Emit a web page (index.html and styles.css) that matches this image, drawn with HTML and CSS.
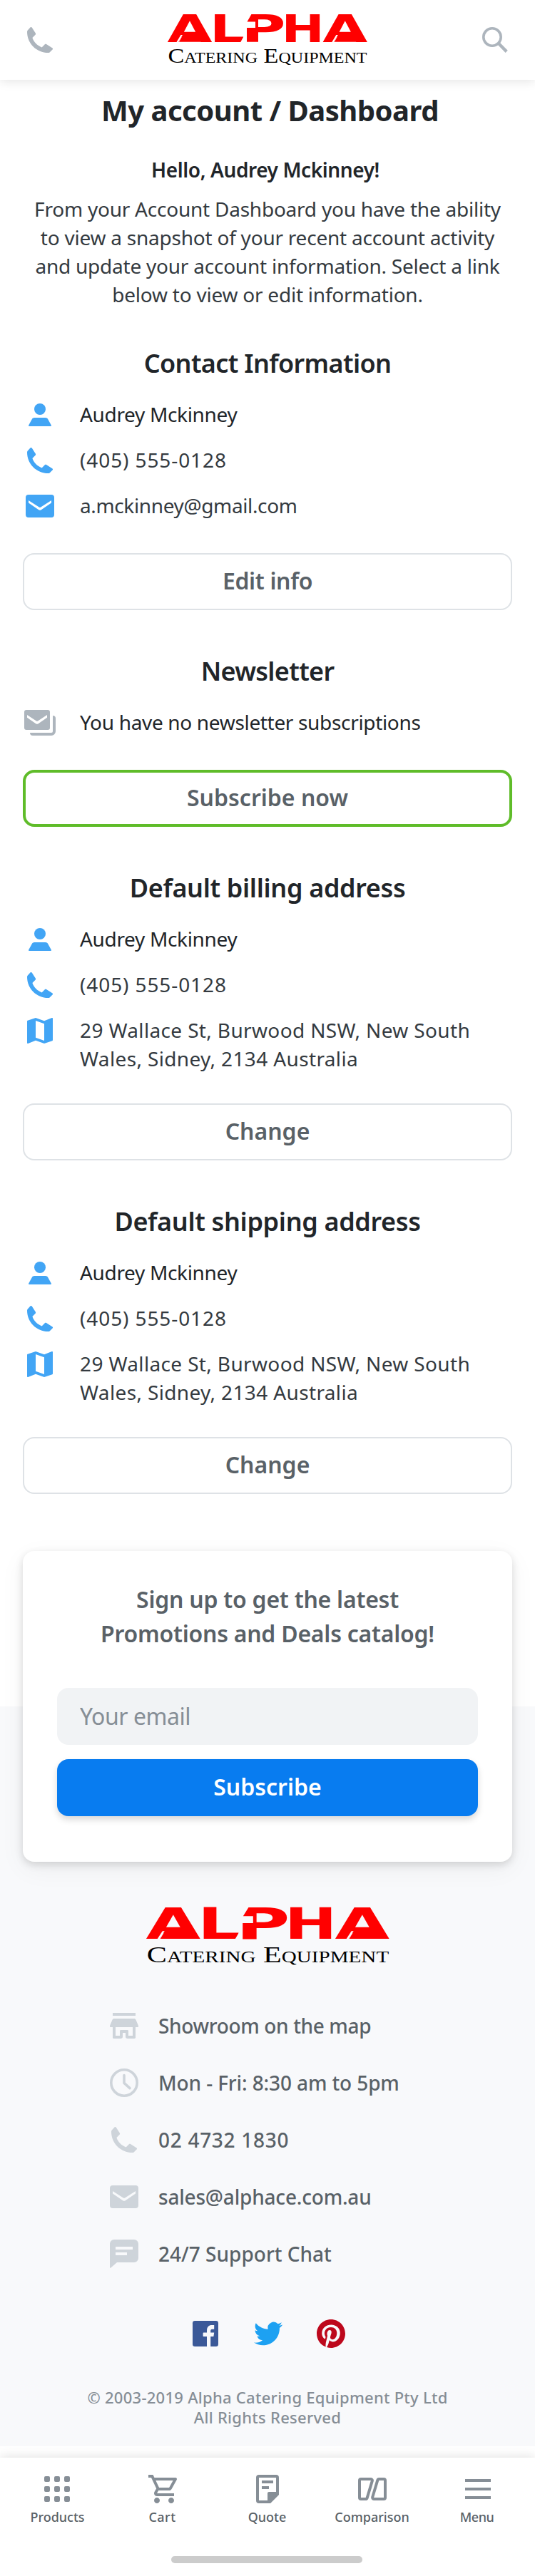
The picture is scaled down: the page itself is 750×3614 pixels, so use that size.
FILE: index.html
```html
<!DOCTYPE html>
<html lang="en">
<head>
<meta charset="utf-8">
<title>My account / Dashboard</title>
<link rel="stylesheet" href="styles.css">
</head>
<body>
<svg class="sprite" aria-hidden="true">
  <symbol id="phone" viewBox="0 0 24 24"><path d="M5.200 3.300c.5-.4 1-.3 1.300.2L8.900 7.300c.2.4.2.8-.1 1.100L6.700 10.500c1 2.900 3.400 5.500 6.600 6.700l2.100-2.100c.3-.3.7-.3 1.100-.1l4.100 2.600c.5.3.6.8.2 1.200l-2 1.900c-.3.2-.7.3-1 .3C9.700 21 3 14.500 3 6.200c0-.4.2-.8.5-1.100z"/></symbol>
  <symbol id="search" viewBox="0 0 24 24"><circle cx="10" cy="10" r="6.100" fill="none" stroke="currentColor" stroke-width="1.800"/><path d="m14.500 14.500 5.600 5.700" fill="none" stroke="currentColor" stroke-width="2.200"/></symbol>
  <symbol id="person" viewBox="0 0 24 24"><circle cx="12" cy="8" r="4"/><path d="M8.300 14h7.400c.9 0 1.600.4 2 1.200l2.200 4c.2.4 0 .8-.5.8H4.600c-.5 0-.7-.4-.5-.8l2.200-4c.4-.8 1.100-1.200 2-1.200z"/></symbol>
  <symbol id="mail" viewBox="0 0 24 24"><path d="M4 4h16a2 2 0 0 1 2 2v12a2 2 0 0 1-2 2H4a2 2 0 0 1-2-2V6a2 2 0 0 1 2-2zm0 4v1.800l7.100 4.800c.6.400 1.200.400 1.800 0L20 9.800V8l-7.400 4.800a1.100 1.100 0 0 1-1.200 0z" fill-rule="evenodd"/></symbol>
  <symbol id="mails" viewBox="0 0 24 24"><path d="M2.500 3h15A1.500 1.500 0 0 1 19 4.500v11a1.500 1.500 0 0 1-1.500 1.500h-15A1.500 1.500 0 0 1 1 15.500v-11A1.500 1.500 0 0 1 2.500 3zM3 6.500v1.900l6.300 4.300c.4.300 1 .3 1.400 0L17 8.400V6.500l-6.500 4.200a1 1 0 0 1-1 0z" fill-rule="evenodd"/><path d="M21 7a2 2 0 0 1 2 2v9a3 3 0 0 1-3 3H7a2 2 0 0 1-2-2h15a1 1 0 0 0 1-1z"/></symbol>
  <symbol id="map" viewBox="0 0 24 24"><path d="m20.500 3-.16.03L15 5.100 9 3 3.360 4.900c-.21.070-.36.250-.36.480V20.500c0 .280.220.500.500.500l.160-.030L9 18.900l6 2.100 5.640-1.900c.210-.070.360-.250.360-.480V3.500c0-.280-.220-.500-.500-.500zM15 19l-6-2.110V5l6 2.110V19z"/></symbol>
  <symbol id="store" viewBox="0 0 24 24"><path d="M4 3h16v2H4zM5 7h14c.6 0 1 .3 1.200.8L22 12v.500c0 .3-.2.500-.5.500H20v7.300c0 .4-.3.700-.7.700h-5c-.7 0-1.300-.5-1.300-1.200V17h-2v2.800c0 .7-.6 1.200-1.300 1.200h-5c-.4 0-.7-.3-.7-.7V13H2.500c-.3 0-.5-.2-.5-.5V12l1.800-4.200C4 7.300 4.400 7 5 7zm1 6v6h3v-3.300c0-.4.300-.7.700-.7h4.600c.4 0 .7.300.7.700V19h3v-6z" fill-rule="evenodd"/></symbol>
  <symbol id="clock" viewBox="0 0 24 24"><g fill="none" stroke="currentColor"><circle cx="12" cy="12" r="9.100" stroke-width="1.800"/><path d="M12 6.800v5.400l4 3.600" stroke-width="1.800" stroke-linecap="round" stroke-linejoin="round"/></g></symbol>
  <symbol id="chat" viewBox="0 0 24 24"><path d="M5 2h14a3 3 0 0 1 3 3v10a3 3 0 0 1-3 3H7l-4.300 3.800c-.3.300-.7.100-.7-.3V5a3 3 0 0 1 3-3zm1 5v2h12V7zm0 4v2h8v-2z" fill-rule="evenodd"/></symbol>
  <symbol id="grid" viewBox="0 0 24 24"><path d="M3.500 3h2a1 1 0 0 1 1 1v2a1 1 0 0 1-1 1h-2a1 1 0 0 1-1-1V4a1 1 0 0 1 1-1zm7 0h2a1 1 0 0 1 1 1v2a1 1 0 0 1-1 1h-2a1 1 0 0 1-1-1V4a1 1 0 0 1 1-1zm7 0h2a1 1 0 0 1 1 1v2a1 1 0 0 1-1 1h-2a1 1 0 0 1-1-1V4a1 1 0 0 1 1-1zm-14 7h2a1 1 0 0 1 1 1v2a1 1 0 0 1-1 1h-2a1 1 0 0 1-1-1v-2a1 1 0 0 1 1-1zm7 0h2a1 1 0 0 1 1 1v2a1 1 0 0 1-1 1h-2a1 1 0 0 1-1-1v-2a1 1 0 0 1 1-1zm7 0h2a1 1 0 0 1 1 1v2a1 1 0 0 1-1 1h-2a1 1 0 0 1-1-1v-2a1 1 0 0 1 1-1zm-14 7h2a1 1 0 0 1 1 1v2a1 1 0 0 1-1 1h-2a1 1 0 0 1-1-1v-2a1 1 0 0 1 1-1zm7 0h2a1 1 0 0 1 1 1v2a1 1 0 0 1-1 1h-2a1 1 0 0 1-1-1v-2a1 1 0 0 1 1-1zm7 0h2a1 1 0 0 1 1 1v2a1 1 0 0 1-1 1h-2a1 1 0 0 1-1-1v-2a1 1 0 0 1 1-1z"/></symbol>
  <symbol id="cart" viewBox="0 0 24 24"><path transform="translate(1 0)" d="M15.550 13c.75 0 1.410-.41 1.750-1.030l3.580-6.490A.996.996 0 0 0 20.010 4H5.210l-.94-2H1v2h2l3.600 7.590-1.350 2.440C4.520 15.370 5.480 17 7 17h12v-2H7l1.100-2h7.450zM6.160 6h12.150l-2.760 5H8.530L6.160 6zM7 18c-1.100 0-1.990.9-1.990 2S5.900 22 7 22s2-.9 2-2-.9-2-2-2zm10 0c-1.100 0-1.990.9-1.990 2s.89 2 1.990 2 2-.9 2-2-.9-2-2-2z"/></symbol>
  <symbol id="quote" viewBox="0 0 24 24"><path d="M6 3h12a1 1 0 0 1 1 1v11.600L13.600 21H6a1 1 0 0 1-1-1V4a1 1 0 0 1 1-1z" fill="none" stroke="currentColor" stroke-width="2"/><path d="M8 6h8v2H8zm0 4h5v2H8zm5 4h7v1.800L13.800 22H12v-7a1 1 0 0 1 1-1z"/></symbol>
  <symbol id="compare" viewBox="0 0 24 24"><g fill="none" stroke="currentColor" stroke-width="2"><path d="M4 5h7a1 1 0 0 1 .9 1.300L8.300 18.300a1 1 0 0 1-1 .7H4a1 1 0 0 1-1-1V6a1 1 0 0 1 1-1z"/><path d="M4 5h7a1 1 0 0 1 .9 1.300L8.300 18.300a1 1 0 0 1-1 .7H4a1 1 0 0 1-1-1V6a1 1 0 0 1 1-1z" transform="rotate(180 12 12)"/></g></symbol>
  <symbol id="menu" viewBox="0 0 24 24"><path d="M3.500 5h18v2h-18zm0 6h18v2h-18zm0 6h18v2h-18z"/></symbol>
  <symbol id="facebook" viewBox="0 0 24 24"><rect x="3" y="3" width="18" height="18" rx="1.600"/><path d="M14.800 21v-7h-2.300a.4.400 0 0 1-.4-.4v-1.900c0-.2.200-.4.400-.4h2.300V9.800c0-2.500 1.400-3.800 3.500-3.800h1.600v2.900h-1.300c-1 0-1.200.6-1.200 1.300v1.100h2.500l-.4 2.700h-2.100v7z" transform="translate(-1.800 0)" fill="#f8f9fb"/></symbol>
  <symbol id="twitter" viewBox="0 0 24 24"><path transform="translate(2 2) scale(.8333)" d="M23.953 4.570a10 10 0 0 1-2.825.775 4.958 4.958 0 0 0 2.163-2.723c-.951.555-2.005.959-3.127 1.184a4.920 4.920 0 0 0-8.384 4.482C7.690 8.095 4.067 6.130 1.640 3.162a4.822 4.822 0 0 0-.666 2.475c0 1.710.870 3.213 2.188 4.096a4.904 4.904 0 0 1-2.228-.616v.060a4.923 4.923 0 0 0 3.946 4.827 4.996 4.996 0 0 1-2.212.085 4.936 4.936 0 0 0 4.604 3.417 9.867 9.867 0 0 1-6.102 2.105c-.390 0-.779-.023-1.170-.067a13.995 13.995 0 0 0 7.557 2.209c9.053 0 13.998-7.496 13.998-13.985 0-.210 0-.420-.015-.630A9.935 9.935 0 0 0 24 4.590z"/></symbol>
  <symbol id="pinterest" viewBox="0 0 24 24"><path transform="translate(2 2) scale(.8333)" d="M12 0C5.373 0 0 5.372 0 12c0 5.084 3.163 9.426 7.627 11.174-.105-.949-.200-2.405.042-3.441.218-.937 1.407-5.965 1.407-5.965s-.359-.719-.359-1.782c0-1.668.967-2.914 2.171-2.914 1.023 0 1.518.769 1.518 1.690 0 1.029-.655 2.568-.994 3.995-.283 1.194.599 2.169 1.777 2.169 2.133 0 3.772-2.249 3.772-5.495 0-2.873-2.064-4.882-5.012-4.882-3.414 0-5.418 2.561-5.418 5.207 0 1.031.397 2.138.893 2.738.098.119.112.224.083.345l-.333 1.360c-.053.220-.174.267-.402.161-1.499-.698-2.436-2.889-2.436-4.649 0-3.785 2.750-7.262 7.929-7.262 4.163 0 7.398 2.967 7.398 6.931 0 4.136-2.607 7.464-6.227 7.464-1.216 0-2.359-.631-2.750-1.378l-.748 2.853c-.271 1.043-1.002 2.350-1.492 3.146C9.570 23.812 10.763 24 12 24c6.627 0 12-5.373 12-12 0-6.628-5.373-12-12-12z"/></symbol>
  <symbol id="logo" viewBox="234 16 282 80" preserveAspectRatio="none">
    <text y="58.700" class="logo-alpha"><tspan x="234.500" textLength="63" lengthAdjust="spacingAndGlyphs">A</tspan><tspan x="294" textLength="49.400" lengthAdjust="spacingAndGlyphs">L</tspan><tspan x="338.200" textLength="62.200" lengthAdjust="spacingAndGlyphs">P</tspan><tspan x="394.400" textLength="60.200" lengthAdjust="spacingAndGlyphs">H</tspan><tspan x="452.300" textLength="63" lengthAdjust="spacingAndGlyphs">A</tspan></text>
    <g fill="#f00"><path d="M256 49.500h28l5 9.200h-38zM473.800 49.500h28l5 9.200h-38z"/></g>
    <g class="logo-cut"><path d="m247.500 59 6-10h2.500l-6 10zM465.300 59l6-10h2.500l-6 10zM343 48.500 337 59.500h7zM345 19v11.500h1.500L353 19zM345 30.500h13V39h-13z"/></g>
    <text x="235.500" y="88.200" class="logo-caption" textLength="279" lengthAdjust="spacingAndGlyphs">Catering Equipment</text>
  </symbol>
</svg>

<header class="header">
  <svg class="icon"><use href="#phone"/></svg>
  <svg class="logo" role="img" aria-label="Alpha Catering Equipment"><use href="#logo"/></svg>
  <svg class="icon"><use href="#search"/></svg>
</header>

<main class="main">
  <h1 class="title">My account / Dashboard</h1>
  <p class="hello">Hello, Audrey Mckinney!</p>
  <p class="intro">From your Account Dashboard you have the ability<br>to view a snapshot of your recent account activity<br>and update your account information. Select a link<br>below to view or edit information.</p>

  <section class="section">
    <h2 class="heading heading-contact">Contact Information</h2>
    <ul class="rows">
      <li class="row"><svg class="icon"><use href="#person"/></svg><span class="name">Audrey Mckinney</span></li>
      <li class="row"><svg class="icon"><use href="#phone"/></svg><span class="tel">(405) 555-0128</span></li>
      <li class="row"><svg class="icon"><use href="#mail"/></svg><span class="email">a.mckinney@gmail.com</span></li>
    </ul>
    <button class="button button-edit">Edit info</button>
  </section>

  <section class="section">
    <h2 class="heading heading-news">Newsletter</h2>
    <ul class="rows">
      <li class="row row-muted"><svg class="icon"><use href="#mails"/></svg><span class="name">You have no newsletter subscriptions</span></li>
    </ul>
    <button class="button button-accent">Subscribe now</button>
  </section>

  <section class="section">
    <h2 class="heading">Default billing address</h2>
    <ul class="rows">
      <li class="row"><svg class="icon"><use href="#person"/></svg><span class="name">Audrey Mckinney</span></li>
      <li class="row"><svg class="icon"><use href="#phone"/></svg><span class="tel">(405) 555-0128</span></li>
      <li class="row"><svg class="icon"><use href="#map"/></svg><span class="address">29 Wallace St, Burwood NSW, New South<br>Wales, Sidney, 2134 Australia</span></li>
    </ul>
    <button class="button">Change</button>
  </section>

  <section class="section">
    <h2 class="heading">Default shipping address</h2>
    <ul class="rows">
      <li class="row"><svg class="icon"><use href="#person"/></svg><span class="name">Audrey Mckinney</span></li>
      <li class="row"><svg class="icon"><use href="#phone"/></svg><span class="tel">(405) 555-0128</span></li>
      <li class="row"><svg class="icon"><use href="#map"/></svg><span class="address">29 Wallace St, Burwood NSW, New South<br>Wales, Sidney, 2134 Australia</span></li>
    </ul>
    <button class="button">Change</button>
  </section>
</main>

<footer class="footer">
  <form class="signup">
    <h3 class="signup-title">Sign up to get the latest<br>Promotions and Deals catalog!</h3>
    <input class="field" type="email" placeholder="Your email" aria-label="Your email">
    <button class="submit" type="button">Subscribe</button>
  </form>
  <svg class="logo logo-large" role="img" aria-label="Alpha Catering Equipment"><use href="#logo"/></svg>
  <ul class="contacts">
    <li class="contact"><svg class="icon"><use href="#store"/></svg><span class="c-store">Showroom on the map</span></li>
    <li class="contact"><svg class="icon"><use href="#clock"/></svg><span class="c-hours">Mon - Fri: 8:30 am to 5pm</span></li>
    <li class="contact"><svg class="icon"><use href="#phone"/></svg><span class="c-tel">02 4732 1830</span></li>
    <li class="contact"><svg class="icon"><use href="#mail"/></svg><span class="c-mail">sales@alphace.com.au</span></li>
    <li class="contact"><svg class="icon"><use href="#chat"/></svg><span>24/7 Support Chat</span></li>
  </ul>
  <div class="social">
    <svg class="icon facebook"><use href="#facebook"/></svg>
    <svg class="icon twitter"><use href="#twitter"/></svg>
    <svg class="icon pinterest"><use href="#pinterest"/></svg>
  </div>
  <p class="copyright">© 2003-2019 Alpha Catering Equipment Pty Ltd<br>All Rights Reserved</p>
</footer>

<nav class="tabbar">
  <div class="tabs">
    <a class="tab"><svg class="icon"><use href="#grid"/></svg><span>Products</span></a>
    <a class="tab tab-cart"><svg class="icon"><use href="#cart"/></svg><span>Cart</span></a>
    <a class="tab"><svg class="icon"><use href="#quote"/></svg><span>Quote</span></a>
    <a class="tab"><svg class="icon"><use href="#compare"/></svg><span>Comparison</span></a>
    <a class="tab tab-menu"><svg class="icon"><use href="#menu"/></svg><span>Menu</span></a>
  </div>
  <div class="home-bar"></div>
</nav>
</body>
</html>
```
FILE: styles.css
```css
* { box-sizing: border-box; margin: 0; padding: 0; }

body {
  --page: #fff;
  background: #fff;
  color: #212529;
  font-family: "Noto Sans", sans-serif;
  font-size: 28px;
  line-height: 40px;
}

ul { list-style: none; }

.sprite { display: none; }

.icon { display: block; flex: none; width: 48px; height: 48px; fill: currentColor; }

.logo { display: block; width: 282px; height: 80px; }
.logo-alpha { font: bold 53px "DejaVu Sans", sans-serif; fill: #f00; }
.logo-caption { font: 28.500px "Liberation Serif", serif; font-variant: small-caps; fill: #000; }
.logo-cut { fill: var(--page); }

.header {
  display: flex;
  align-items: center;
  justify-content: space-between;
  height: 112px;
  padding: 0 32px;
  color: #adb5bd;
  box-shadow: 0 2px 14px rgba(0, 0, 0, .11);
}

.main { padding: 15px 32px 80px; }

.title { padding-left: 7px; font-size: 40px; font-weight: 700; line-height: 56px; letter-spacing: -.5px; text-align: center; }
.hello { margin-top: 35px; padding-right: 6px; font-weight: 600; letter-spacing: -.4px; text-align: center; }
.intro { margin-top: 15px; color: #343a40; letter-spacing: -.23px; text-align: center; }

.section { margin-top: 62px; }
.intro + .section { margin-top: 53px; }

.heading { margin-bottom: 24px; font-size: 36px; font-weight: 600; line-height: 48px; letter-spacing: -.35px; text-align: center; }
.heading-contact { letter-spacing: -.65px; }
.heading-news { letter-spacing: -.7px; }

.rows { display: flex; flex-direction: column; gap: 16px; margin-bottom: 42px; }
.row { display: flex; gap: 32px; min-height: 48px; color: #343a40; }
.row .icon { color: #42a5f5; }
.row-muted .icon { color: #adb5bd; }
.row span { padding: 3px 0 1px; }
.name { color: #212529; letter-spacing: -.33px; }
.tel { letter-spacing: .9px; }
.email { letter-spacing: -.37px; }
.address { letter-spacing: .36px; }

.button {
  display: block;
  width: 100%;
  height: 80px;
  padding-bottom: 3px;
  border: 2px solid #dee2e6;
  border-radius: 16px;
  background: #fff;
  color: #596167;
  font: 600 32px "Noto Sans", sans-serif;
}
.button-edit { letter-spacing: -.35px; }
.button-accent { border: 4px solid #5fbc29; }

.footer {
  --page: #f8f9fb;
  display: flex;
  flex-direction: column;
  align-items: center;
  height: 1256px;
  padding: 0 32px;
  background: linear-gradient(#fff 218px, #f8f9fb 218px);
}

.signup {
  width: 100%;
  height: 436px;
  padding: 44px 48px 64px;
  border-radius: 16px;
  background: #fff;
  box-shadow: 0 4px 12px rgba(0, 0, 0, .14), 0 10px 36px rgba(0, 0, 0, .05);
}
.signup-title { color: #596167; font-size: 32px; font-weight: 600; line-height: 48px; letter-spacing: -.25px; text-align: center; }
.field, .submit { display: block; width: 100%; height: 80px; border: 0; border-radius: 16px; }
.field { margin-top: 52px; padding: 0 32px 1px; background: #f1f3f5; font: 32px "Noto Sans", sans-serif; letter-spacing: -.45px; }
.field::placeholder { color: #868e96; }
.submit { margin-top: 20px; padding-bottom: 3px; background: #087cf0; color: #fff; font: 600 32px "Noto Sans", sans-serif; box-shadow: 0 5px 10px rgba(0, 0, 0, .15); }

.logo-large { flex: none; width: 343px; height: 90px; margin-top: 60px; }

.contacts { display: flex; flex-direction: column; gap: 32px; width: 450px; margin-top: 56px; }
.contact { display: flex; gap: 24px; height: 48px; color: #596167; font-weight: 500; }
.contact .icon { color: #ced4da; }
.contact span { padding-top: 4px; white-space: nowrap; }
.c-store { letter-spacing: -.35px; }
.c-hours { letter-spacing: -.12px; }
.c-tel { letter-spacing: .7px; }
.c-mail { letter-spacing: -.2px; }

.social { display: flex; gap: 40px; margin: 64px 0 0 2px; }
.facebook { color: #3b5998; }
.twitter { color: #1da1f2; }
.pinterest { color: #bd081c; }

.copyright { margin-top: 51px; color: #868e96; font-size: 22px; font-weight: 500; line-height: 28px; letter-spacing: .27px; text-align: center; }

.tabbar { height: 166px; margin-top: 16px; padding: 20px 8px 0 7px; background: #fff; box-shadow: 0 -2px 14px rgba(0, 0, 0, .11); }
.tabs { display: grid; grid-template-columns: repeat(5, 1fr); }
.tab { display: flex; flex-direction: column; align-items: center; gap: 3px; color: #596167; font-size: 18px; font-weight: 500; line-height: 24px; }
.tab .icon { color: #868e96; }
.tab-cart { letter-spacing: .5px; }
.tab-menu { letter-spacing: -.5px; }
.home-bar { width: 268px; height: 10px; margin: 43px 0 0 233px; border-radius: 5px; background: #ccc; }
```
